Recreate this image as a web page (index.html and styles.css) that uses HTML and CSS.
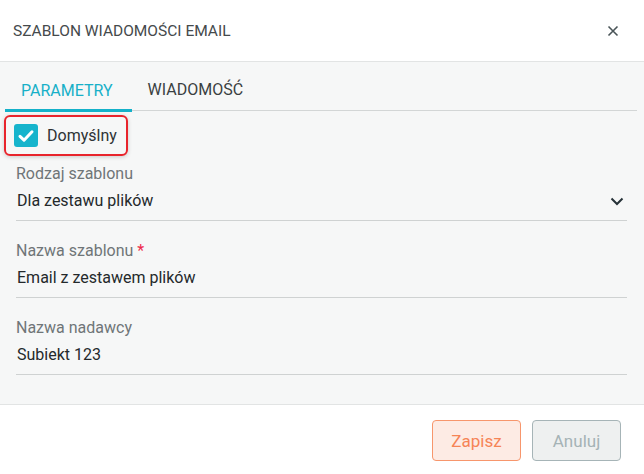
FILE: index.html
```html
<!DOCTYPE html>
<html lang="pl">
<head>
<meta charset="utf-8">
<link rel="stylesheet" href="styles.css">
</head>
<body>
<div class="dialog">
  <div class="header">
    <div class="title">SZABLON WIADOMOŚCI EMAIL</div>
    <svg class="close" width="12" height="12" viewBox="0 0 12 12"><path d="M1.5 1.5 L10.5 10.5 M10.5 1.5 L1.5 10.5" stroke="#4a5558" stroke-width="1.6" fill="none"/></svg>
  </div>
  <div class="body">
    <div class="tabs">
      <div class="tab active">PARAMETRY</div>
      <div class="tab">WIADOMOŚĆ</div>
    </div>
    <div class="content">
      <div class="check-wrap">
        <span class="checkbox">
          <svg width="18" height="18" viewBox="0 0 18 18"><path d="M3 9.4 L7 13.2 L15 4.8" stroke="#fff" stroke-width="3" fill="none" stroke-linecap="round" stroke-linejoin="round"/></svg>
        </span>
        <span class="check-label">Domyślny</span>
      </div>
      <div class="field first">
        <div class="label">Rodzaj szablonu</div>
        <div class="value select">
          <span>Dla zestawu plików</span>
          <svg width="14" height="9" viewBox="0 0 14 9"><path d="M1.5 1.5 L7 7 L12.5 1.5" stroke="#263238" stroke-width="2" fill="none"/></svg>
        </div>
      </div>
      <div class="field">
        <div class="label">Nazwa szablonu<span class="req">*</span></div>
        <div class="value">Email z zestawem plików</div>
      </div>
      <div class="field">
        <div class="label">Nazwa nadawcy</div>
        <div class="value">Subiekt 123</div>
      </div>
    </div>
  </div>
  <div class="footer">
    <button class="btn save">Zapisz</button>
    <button class="btn cancel">Anuluj</button>
  </div>
</div>
</body>
</html>
```
FILE: styles.css
```css
* { box-sizing: border-box; }
html, body { margin: 0; padding: 0; background: #fff; }
body { font-family: Roboto, "Liberation Sans", sans-serif; }
.dialog { width: 644px; height: 474px; display: flex; flex-direction: column; background: #fff; }
.header {
  height: 62px; flex: none; display: flex; align-items: center; justify-content: space-between;
  padding: 0 25px 0 13px; border-bottom: 1px solid #e2e4e4;
}
.title { font-size: 15.5px; color: #454a4c; padding-top: 1px; }
.close { display: block; }
.body { background: #f6f7f7; height: 343px; flex: none; border-bottom: 1px solid #e2e4e4; padding: 0 7px 0 5px; }
.tabs { display: flex; height: 49px; border-bottom: 1px solid #d3d6d6; }
.tab {
  font-size: 16px; color: #3a3f41; display: flex; align-items: center; padding: 7px 16px 0 16px;
}
.tab.active { color: #17b0c8; border-bottom: 3px solid #14b1c9; margin-bottom: -2px; padding: 9px 19px 0 16px; }
.content { padding: 0 10px 0 11px; }
.check-wrap {
  margin: 4px 0 0 -12px; width: 124px; height: 41px; border: 2px solid #e8242c; border-radius: 6px;
  display: flex; align-items: center; padding-left: 8px; gap: 9px;
  box-shadow: 0 1px 4px rgba(0,0,0,0.18);
}
.checkbox {
  width: 24px; height: 23px; border-radius: 3px; background: #16b4cc;
  display: flex; align-items: center; justify-content: center;
}
.checkbox svg { display: block; }
.check-label { font-size: 16px; color: #2e3335; }
.field { padding-top: 20px; border-bottom: 1px solid #cfd2d2; }
.field.first { padding-top: 8px; }
.label { font-size: 16px; line-height: 20px; color: #6f7577; }
.req { color: #ee2a4c; margin-left: 4px; }
.value { font-size: 16px; line-height: 20px; color: #24292b; padding: 7px 0 9px 1px; }
.select { display: flex; justify-content: space-between; align-items: center; padding-right: 3px; }
.select svg { display: block; }
.footer { flex: 1; display: flex; justify-content: flex-end; align-items: flex-start; padding: 15px 23px 0 0; gap: 11px; }
.btn {
  width: 89px; height: 41px; border-radius: 4px; font-family: Roboto, "Liberation Sans", sans-serif;
  font-size: 17px; padding: 0; cursor: pointer;
}
.save { background: #fdebe4; border: 1px solid #f7966c; color: #f68456; }
.cancel { background: #eef0f0; border: 1px solid #a6b4b7; color: #a5b3b6; }
```
